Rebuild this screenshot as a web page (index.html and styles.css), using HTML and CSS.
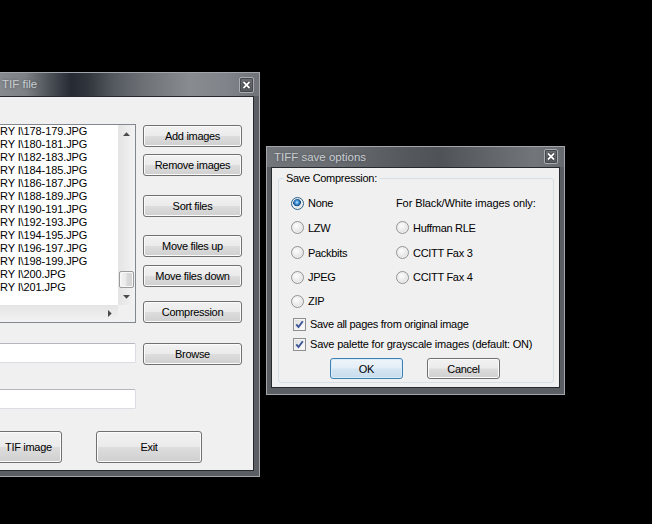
FILE: index.html
```html
<!DOCTYPE html>
<html>
<head>
<meta charset="utf-8">
<title>TIFF save options</title>
<link rel="stylesheet" href="styles.css">
</head>
<body>
<div class="win main-win">
  <div class="titlebar main-titlebar">
    <span class="title-text main-title">TIF file</span>
    <span class="close main-close"><svg width="13" height="14" viewBox="0 0 13 14"><path d="M3.5 4 L9.5 10 M9.5 4 L3.5 10" stroke="#2a2d31" stroke-width="3.2"/><path d="M3.5 4 L9.5 10 M9.5 4 L3.5 10" stroke="#ffffff" stroke-width="1.8"/></svg></span>
  </div>
  <div class="client main-client">
    <div class="top-row">
      <div class="listbox">
        <div class="list-items">
          <div class="item">RY I\178-179.JPG</div>
          <div class="item">RY I\180-181.JPG</div>
          <div class="item">RY I\182-183.JPG</div>
          <div class="item">RY I\184-185.JPG</div>
          <div class="item">RY I\186-187.JPG</div>
          <div class="item">RY I\188-189.JPG</div>
          <div class="item">RY I\190-191.JPG</div>
          <div class="item">RY I\192-193.JPG</div>
          <div class="item">RY I\194-195.JPG</div>
          <div class="item">RY I\196-197.JPG</div>
          <div class="item">RY I\198-199.JPG</div>
          <div class="item">RY I\200.JPG</div>
          <div class="item">RY I\201.JPG</div>
        </div>
        <div class="vscroll">
          <div class="sb-btn"><svg width="7" height="4" viewBox="0 0 7 4"><polygon points="0,4 3.5,0.3 7,4" fill="#4a4a4a"/></svg></div>
          <div class="vtrack"></div>
          <div class="thumb"></div>
          <div class="sb-btn"><svg width="7" height="4" viewBox="0 0 7 4"><polygon points="0,0 3.5,3.7 7,0" fill="#4a4a4a"/></svg></div>
        </div>
        <div class="hscroll">
          <div class="htrack"></div>
          <div class="sb-btn"><svg width="4" height="7" viewBox="0 0 4 7"><polygon points="0,0 3.7,3.5 0,7" fill="#4a4a4a"/></svg></div>
        </div>
        <div class="corner"></div>
      </div>
      <div class="btn-col">
        <button class="btn b-add">Add images</button>
        <button class="btn b-remove">Remove images</button>
        <button class="btn b-sort">Sort files</button>
        <button class="btn b-up">Move files up</button>
        <button class="btn b-down">Move files down</button>
        <button class="btn b-comp">Compression</button>
      </div>
    </div>
    <div class="field-row">
      <div class="field"></div>
      <button class="btn b-browse">Browse</button>
    </div>
    <div class="field field2"></div>
    <div class="bottom-row">
      <button class="btn big cut">TIF image</button>
      <button class="btn big exit">Exit</button>
    </div>
  </div>
</div>

<div class="win dlg-win">
  <div class="titlebar dlg-titlebar">
    <span class="title-text dlg-title">TIFF save options</span>
    <span class="close dlg-close"><svg width="12" height="13" viewBox="0 0 12 13"><path d="M3 3.5 L9 9.5 M9 3.5 L3 9.5" stroke="#2a2d31" stroke-width="3.2"/><path d="M3 3.5 L9 9.5 M9 3.5 L3 9.5" stroke="#ffffff" stroke-width="1.8"/></svg></span>
  </div>
  <div class="client dlg-client">
    <fieldset class="group">
      <legend class="group-label">Save Compression:</legend>
      <div class="opts">
        <label class="opt"><span class="radio on"></span>None</label>
        <span class="opt bw-label">For Black/White images only:</span>
        <label class="opt"><span class="radio"></span>LZW</label>
        <label class="opt"><span class="radio"></span>Huffman RLE</label>
        <label class="opt"><span class="radio"></span>Packbits</label>
        <label class="opt"><span class="radio"></span>CCITT Fax 3</label>
        <label class="opt"><span class="radio"></span>JPEG</label>
        <label class="opt"><span class="radio"></span>CCITT Fax 4</label>
        <label class="opt"><span class="radio"></span>ZIP</label>
        <span class="opt"></span>
      </div>
      <div class="checks">
        <label class="check-row"><span class="cb"><svg width="11" height="11" viewBox="0 0 11 11"><path d="M2.3 5.3 L4.5 8 L8.8 2.2" fill="none" stroke="#3b5597" stroke-width="1.9"/></svg></span>Save all pages from original image</label>
        <label class="check-row wide"><span class="cb"><svg width="11" height="11" viewBox="0 0 11 11"><path d="M2.3 5.3 L4.5 8 L8.8 2.2" fill="none" stroke="#3b5597" stroke-width="1.9"/></svg></span>Save palette for grayscale images (default: ON)</label>
      </div>
      <div class="dlg-buttons">
        <button class="btn dlg-btn default">OK</button>
        <button class="btn dlg-btn">Cancel</button>
      </div>
    </fieldset>
  </div>
</div>
</body>
</html>
```

FILE: styles.css
```css
* { box-sizing: border-box; }
html, body { margin: 0; padding: 0; }
body {
  width: 652px;
  height: 524px;
  background: #000;
  position: relative;
  overflow: hidden;
  font-family: "Liberation Sans", Arial, sans-serif;
  font-size: 11px;
  letter-spacing: -0.3px;
  color: #000;
}

/* windows */
.win {
  position: absolute;
  display: flex;
  flex-direction: column;
  background: #5b5f64;
  border: 1px solid #a2a6aa;
}
.main-win { left: -10px; top: 72px; width: 270px; height: 405px; }
.dlg-win { left: 266px; top: 146px; width: 299px; height: 249px; }

.titlebar {
  display: flex;
  justify-content: space-between;
  align-items: flex-start;
  flex: none;
}
.main-titlebar {
  height: 23px;
  padding: 0 5px 0 11px;
  background: linear-gradient(90deg, #8a8e92 0%, #7d8185 13%, #4b5057 22%, #262b33 30%, #30353c 36%, #555a60 46%, #6f7378 58%, #888c90 74%, #80848a 88%, #6f7378 100%);
}
.dlg-titlebar {
  height: 20px;
  padding: 0 6px 0 7px;
  background: linear-gradient(90deg, #73777b 0%, #6a6e72 22%, #56595e 45%, #4f5358 58%, #65696d 78%, #72767a 90%, #666a6e 100%);
}
.title-text {
  color: #c9cdd1;
  font-size: 11.5px;
  letter-spacing: 0;
  white-space: nowrap;
  text-shadow: 0 0 3px rgba(40,44,50,0.5);
}
.main-title { line-height: 23px; }
.dlg-title { line-height: 20px; }

.close {
  display: flex;
  align-items: center;
  justify-content: center;
  border: 1px solid #a9adb1;
  border-radius: 2px;
  background: linear-gradient(#6c7075, #55595e);
  box-shadow: inset 0 0 0 1px #44484d;
}
.main-close { width: 15px; height: 16px; margin-top: 4px; }
.dlg-close { width: 14px; height: 15px; margin-top: 2px; }

.client {
  flex: 1;
  background: #f0f0f0;
  border: 1px solid #25292e;
}
.main-client { margin: 0 5px 5px; padding-top: 27px; }
.dlg-client { margin: 0 4px 6px; }

/* buttons */
.btn {
  display: flex;
  align-items: center;
  justify-content: center;
  padding: 0;
  margin: 0;
  font-family: inherit;
  font-size: 11px;
  letter-spacing: -0.3px;
  color: #000;
  border: 1px solid #707070;
  border-radius: 3px;
  background: linear-gradient(#f2f2f2 0%, #ebebeb 48%, #dddddd 52%, #cfcfcf 100%);
  box-shadow: inset 0 0 0 1px #fbfbfb;
}

/* main window layout */
.top-row { display: flex; gap: 7px; }
.listbox {
  width: 139px;
  height: 199px;
  border: 1px solid #828790;
  background: #fff;
  display: grid;
  grid-template-columns: 120px 17px;
  grid-template-rows: 180px 17px;
}
.list-items { overflow: hidden; }
.item {
  line-height: 13px;
  padding-left: 2px;
  white-space: nowrap;
  letter-spacing: -0.1px;
}
.vscroll {
  display: flex;
  flex-direction: column;
  background: linear-gradient(90deg, #e4e4e4, #f3f3f3);
}
.sb-btn {
  flex: none;
  width: 17px;
  height: 17px;
  display: flex;
  align-items: center;
  justify-content: center;
}
.vtrack { flex: 1; }
.thumb {
  flex: none;
  height: 17px;
  margin: 0 1px;
  border: 1px solid #9a9a9a;
  border-radius: 2px;
  background: linear-gradient(90deg, #f4f4f4 0%, #e9e9e9 48%, #dadada 52%, #d2d2d2 100%);
  box-shadow: inset 0 0 0 1px #f8f8f8;
}
.hscroll {
  display: flex;
  background: linear-gradient(#e4e4e4, #f3f3f3);
}
.htrack { flex: 1; }
.corner { background: #f0f0f0; }

.btn-col { display: flex; flex-direction: column; width: 99px; }
.btn-col .btn { height: 22px; }
.b-add { margin-top: 1px; }
.b-remove { margin-top: 7px; }
.b-sort { margin-top: 19px; }
.b-up { margin-top: 18px; }
.b-down { margin-top: 8px; }
.b-comp { margin-top: 14px; }

.field-row { display: flex; gap: 7px; margin-top: 20px; }
.field {
  width: 139px;
  height: 20px;
  background: #fff;
  border: 1px solid #dadde2;
  border-top-color: #b4b7bd;
  border-radius: 2px;
}
.b-browse { width: 99px; height: 22px; }
.field2 { margin-top: 24px; }

.bottom-row { display: flex; margin-top: 22px; }
.big { height: 32px; }
.cut { width: 65px; justify-content: flex-start; padding-left: 7px; }
.exit { width: 106px; margin-left: 34px; }

/* dialog */
.group {
  margin: 4px 5px 0 6px;
  padding: 6px 0 3px 12px;
  min-width: 0;
  border: 1px solid #d5dfe5;
  border-radius: 3px;
}
.group-label {
  padding: 0 2px;
  margin-left: -7px;
  line-height: 13px;
}
.opts {
  display: grid;
  grid-template-columns: 105px auto;
  grid-template-rows: 24px 25px 25px 24px 24px;
}
.opt {
  display: flex;
  align-items: center;
  gap: 4px;
  white-space: nowrap;
}
.bw-label { letter-spacing: -0.1px; }
.radio {
  flex: none;
  width: 13px;
  height: 13px;
  border-radius: 50%;
  border: 1px solid #939393;
  background: radial-gradient(circle at 40% 35%, #fdfdfd 0%, #f0f0f0 35%, #d6d6d6 100%);
  box-shadow: inset 0 0 0 1px #eeeeee;
}
.radio.on {
  border-color: #2c628b;
  background:
    radial-gradient(circle at 45% 40%, #d6efff 0px, #5aa7e6 1.3px, #2a74b8 2.6px, #174c80 3.6px, rgba(23,76,128,0) 4.2px),
    radial-gradient(circle at 40% 35%, #fdfdfd 0%, #ececec 50%, #cfcfcf 100%);
}
.checks { margin-top: 1px; }
.check-row {
  display: flex;
  align-items: center;
  gap: 4px;
  height: 20px;
  margin-left: 2px;
  white-space: nowrap;
}
.check-row.wide { letter-spacing: -0.2px; }
.cb {
  flex: none;
  width: 13px;
  height: 13px;
  border: 1px solid #8e8f8f;
  background: linear-gradient(135deg, #d9d9d9 0%, #f2f2f2 60%, #ffffff 100%);
  box-shadow: inset 0 0 0 1px #f4f4f4;
  display: flex;
  align-items: center;
  justify-content: center;
}
.cb svg { display: block; }
.dlg-buttons { display: flex; gap: 24px; margin-top: 4px; padding-left: 39px; }
.dlg-btn { width: 73px; height: 21px; }
.default {
  border-color: #3c7fb1;
  background: linear-gradient(#eef5fa 0%, #e3eef7 48%, #d5e6f3 52%, #c8dcec 100%);
  box-shadow: inset 0 0 0 1px #d8ecfa;
}
```
